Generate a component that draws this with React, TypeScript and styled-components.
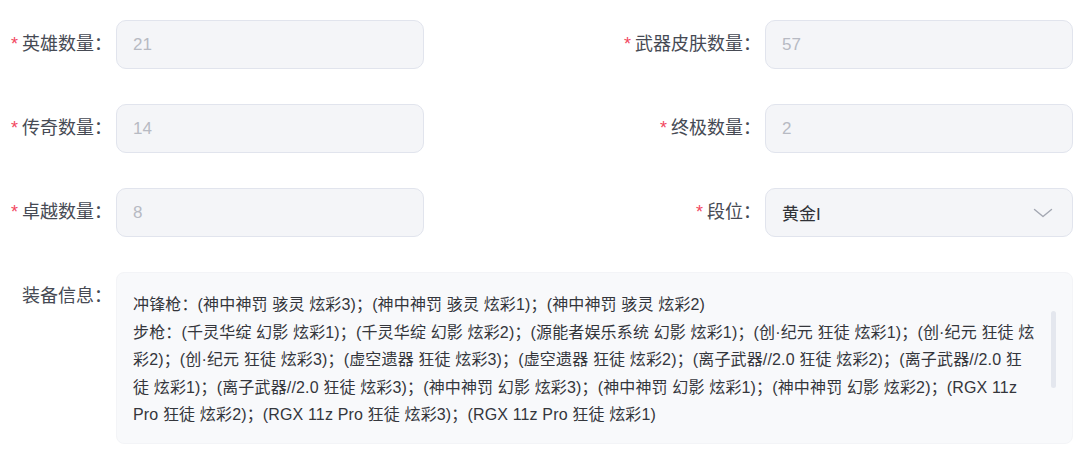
import styled, { createGlobalStyle } from "styled-components";

const GlobalStyle = createGlobalStyle`
  body {
    margin: 0;
    background: #ffffff;
    font-family: "Liberation Sans", "Noto Sans CJK SC", sans-serif;
  }
`;

const Form = styled.div`
  width: 1080px;
  box-sizing: border-box;
  padding: 20px 7px 0 0;
`;

const Row = styled.div`
  display: flex;
  justify-content: space-between;
  margin-bottom: 35px;
`;

const FormItem = styled.div<{ $grow?: boolean }>`
  display: flex;
  align-items: flex-start;
  flex: ${(props) => (props.$grow ? "1" : "none")};
`;

const Label = styled.label<{ $width?: number }>`
  box-sizing: border-box;
  width: ${(props) => (props.$width ? `${props.$width}px` : "auto")};
  height: 49px;
  line-height: 49px;
  padding-right: 4px;
  text-align: right;
  font-size: 18px;
  color: #464a54;
  white-space: nowrap;
`;

const Star = styled.span`
  color: #f2475f;
  font-size: 18px;
  margin-right: 4px;
`;

const InputBox = styled.div<{ $filled?: boolean }>`
  box-sizing: border-box;
  width: 308px;
  height: 49px;
  display: flex;
  align-items: center;
  justify-content: space-between;
  padding: 0 19px 0 16px;
  background: #f4f5f8;
  border: 1px solid #e1e4ed;
  border-radius: 10px;
  font-size: 17px;
  color: ${(props) => (props.$filled ? "#2f3137" : "#b7bac3")};
`;

const TextArea = styled.div`
  position: relative;
  box-sizing: border-box;
  flex: 1;
  height: 172px;
  padding: 18px 40px 0 16px;
  background: #f8f9fb;
  border: 1px solid #f3f4f7;
  border-radius: 8px;
  font-size: 16px;
  line-height: 27.5px;
  letter-spacing: 0.15px;
  color: #34363c;
  overflow: hidden;
`;

const Line = styled.div`
  white-space: nowrap;
`;

const ScrollThumb = styled.div`
  position: absolute;
  right: 16px;
  top: 38px;
  width: 5px;
  height: 77px;
  border-radius: 3px;
  background: #e4e7ee;
`;

const Chevron = () => (
  <svg width="20" height="10" viewBox="0 0 20 10" fill="none">
    <path d="M1.5 1.5 L10 8.5 L18.5 1.5" stroke="#a3a7b2" strokeWidth="1.4" strokeLinecap="round" strokeLinejoin="round" />
  </svg>
);

const Field = ({ label, value, width }: { label: string; value: string; width?: number }) => (
  <FormItem>
    <Label $width={width}>
      <Star>*</Star>
      {label}：
    </Label>
    <InputBox>{value}</InputBox>
  </FormItem>
);

const lines = [
  "冲锋枪：(神中神罚 骇灵 炫彩3)；(神中神罚 骇灵 炫彩1)；(神中神罚 骇灵 炫彩2)",
  "步枪：(千灵华绽 幻影 炫彩1)；(千灵华绽 幻影 炫彩2)；(源能者娱乐系统 幻影 炫彩1)；(创·纪元 狂徒 炫彩1)；(创·纪元 狂徒 炫",
  "彩2)；(创·纪元 狂徒 炫彩3)；(虚空遗器 狂徒 炫彩3)；(虚空遗器 狂徒 炫彩2)；(离子武器//2.0 狂徒 炫彩2)；(离子武器//2.0 狂",
  "徒 炫彩1)；(离子武器//2.0 狂徒 炫彩3)；(神中神罚 幻影 炫彩3)；(神中神罚 幻影 炫彩1)；(神中神罚 幻影 炫彩2)；(RGX 11z",
  "Pro 狂徒 炫彩2)；(RGX 11z Pro 狂徒 炫彩3)；(RGX 11z Pro 狂徒 炫彩1)",
];

export default function App() {
  return (
    <>
      <GlobalStyle />
      <Form>
        <Row>
          <Field label="英雄数量" value="21" width={116} />
          <Field label="武器皮肤数量" value="57" />
        </Row>
        <Row>
          <Field label="传奇数量" value="14" width={116} />
          <Field label="终极数量" value="2" />
        </Row>
        <Row>
          <Field label="卓越数量" value="8" width={116} />
          <FormItem>
            <Label>
              <Star>*</Star>
              段位：
            </Label>
            <InputBox $filled>
              <span>黄金I</span>
              <Chevron />
            </InputBox>
          </FormItem>
        </Row>
        <FormItem $grow>
          <Label $width={116}>装备信息：</Label>
          <TextArea>
            {lines.map((l, i) => (
              <Line key={i}>{l}</Line>
            ))}
            <ScrollThumb />
          </TextArea>
        </FormItem>
      </Form>
    </>
  );
}
